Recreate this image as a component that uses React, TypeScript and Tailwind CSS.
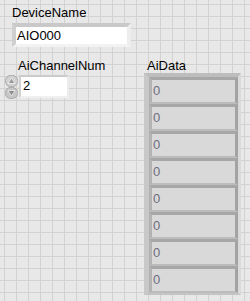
const font = { fontFamily: '"Liberation Sans", Arial, sans-serif' };

const values = [0, 0, 0, 0, 0, 0, 0, 0];

function Spinner() {
  return (
    <div className="flex w-[13px] flex-col">
      <svg width="13" height="12" viewBox="0 0 13 12">
        <rect x="0.5" y="0.5" width="12" height="11" rx="5" fill="#d2d2d2" stroke="#a8a8a8" />
        <path d="M3 8.5 L6.5 3 L10 8.5 Z" fill="#9a9a9a" stroke="#f4f4f4" strokeWidth="0.8" />
      </svg>
      <svg width="13" height="12" viewBox="0 0 13 12">
        <rect x="0.5" y="0.5" width="12" height="11" rx="5" fill="#c6c6c6" stroke="#a8a8a8" />
        <path d="M3 3.5 L6.5 9 L10 3.5 Z" fill="#8e8e8e" stroke="#ececec" strokeWidth="0.8" />
      </svg>
    </div>
  );
}

function Element({ value }: { value: number }) {
  return (
    <div className="h-[27px] border-t-[3px] border-r-[3px] border-b-[2px] border-l-[3px] border-t-[#a7a7a7] border-r-[#a3a3a3] border-b-[#bcbcbc] border-l-[#b3b3b3] bg-[#d9d9d9] pl-[1px] text-[13px] leading-[22px] text-[#6b6e80]">
      {value}
    </div>
  );
}

export default function App() {
  return (
    <div
      className="h-[301px] w-[250px] overflow-hidden bg-[#e8e8e8] bg-[linear-gradient(to_right,#d2d2d2_1px,transparent_1px),linear-gradient(to_bottom,#d2d2d2_1px,transparent_1px)] bg-size-[12px_12px] bg-position-[4px_4px] text-black"
      style={font}
    >
      <div className="flex flex-col pt-[5px]">
        <div className="pl-[12px] text-[13px] leading-[15px]">DeviceName</div>
        <div className="ml-[12px] mt-[3px] h-[24px] w-[119px] border-t-[4px] border-r-[4px] border-b-[3px] border-l-[4px] border-t-[#c9c9c9] border-r-[#ededed] border-b-[#f2f2f2] border-l-[#cfcfcf] bg-white pl-[1px] text-[13px] leading-[17px]">
          AIO000
        </div>

        <div className="mt-[11px] flex pl-[5px]">
          <div className="flex w-[141px] flex-col">
            <div className="pl-[13px] text-[13px] leading-[15px]">AiChannelNum</div>
            <div className="mt-[2px] flex">
              <Spinner />
              <div className="ml-[1px] h-[23px] w-[50px] border-t-[2px] border-r-[2px] border-b-[2px] border-l-[2px] border-t-[#cbcbcb] border-r-[#ececec] border-b-[#f0f0f0] border-l-[#d0d0d0] bg-white pl-[2px] text-[13px] leading-[18px]">
                2
              </div>
            </div>
          </div>

          <div className="-ml-[2px] flex flex-col">
            <div className="pl-[3px] text-[13px] leading-[15px]">AiData</div>
            <div className="w-[97px] border-t-[4px] border-r-[3px] border-b-[2px] border-l-[5px] border-t-[#bdbdbd] border-r-[#dadada] border-b-[#c4c4c4] border-l-[#c8c8c8] bg-[#c3c3c3]">
              {values.map((v, i) => (
                <Element key={i} value={v} />
              ))}
            </div>
          </div>
        </div>
      </div>
    </div>
  );
}
